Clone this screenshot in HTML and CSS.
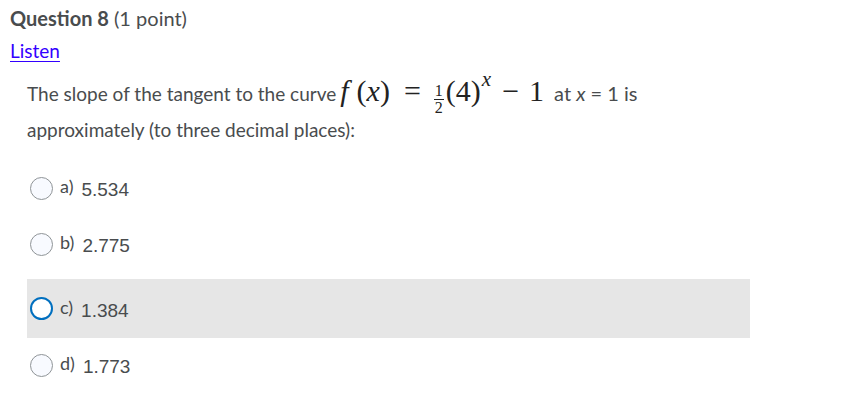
FILE: index.html
```html
<!DOCTYPE html>
<html>
<head>
<meta charset="utf-8">
<link rel="stylesheet" href="styles.css">
</head>
<body>
<div class="page">
  <h2 class="qtitle"><strong>Question 8</strong> <span class="pts">(1 point)</span></h2>
  <a class="listen" href="#">Listen</a>
  <div class="qtext">
    <p class="line1">The slope of the tangent to the curve<span class="math"><span class="mi f">f</span><span class="mo lp">(</span><span class="mi">x</span><span class="mo">)</span><span class="eq">=</span><span class="frac"><span class="num">1</span><span class="den">2</span></span><span class="mo">(4)</span><sup class="mi sup">x</sup><span class="minus">−</span><span class="one">1</span></span><span class="small">at <i class="ix">x</i> = 1 is</span></p>
    <p class="line2">approximately (to three decimal places):</p>
  </div>
  <div class="options">
    <div class="opt opt-a"><span class="radio"></span><span class="lbl">a)</span><span class="val">5.534</span></div>
    <div class="opt opt-b"><span class="radio"></span><span class="lbl">b)</span><span class="val">2.775</span></div>
    <div class="opt opt-c selected"><span class="radio"></span><span class="lbl">c)</span><span class="val">1.384</span></div>
    <div class="opt opt-d"><span class="radio"></span><span class="lbl">d)</span><span class="val">1.773</span></div>
  </div>
</div>
</body>
</html>
```

FILE: styles.css
```css
html, body {
  margin: 0;
  padding: 0;
  background: #ffffff;
}
body {
  font-family: Lato, "Open Sans", sans-serif;
  color: #494c4e;
}
.page {
  padding: 5px 0 0 10px;
}
.qtitle {
  margin: 0;
  font-size: 20px;
  line-height: 26px;
  font-weight: 400;
  color: #494c4e;
}
.qtitle strong {
  font-weight: 700;
}
.listen {
  display: inline-block;
  margin-top: 9px;
  font-size: 19px;
  line-height: 22px;
  color: #3300ff;
  text-decoration: underline;
  text-underline-offset: 3px;
}
.qtext {
  margin: 16px 0 0 17px;
  font-size: 19px;
  line-height: 30px;
}
.qtext p {
  margin: 0;
}
.math {
  font-family: "Liberation Serif", "DejaVu Serif", serif;
  font-size: 30px;
  line-height: 0;
  color: #222222;
}
.mi {
  font-style: italic;
}
.mo, .one {
  font-style: normal;
}
.f {
  margin-left: 4px;
}
.lp {
  margin-left: 8px;
}
.eq {
  margin: 0 13px 0 14px;
}
.frac {
  display: inline-flex;
  flex-direction: column;
  align-items: center;
  vertical-align: 5px;
  font-size: 16px;
  line-height: 14px;
  margin-right: 2px;
}
.frac .num {
  border-bottom: 1px solid #222;
  padding: 0 1px 1px;
}
.frac .den {
  padding: 1px 1px 0;
}
.sup {
  font-size: 21px;
  vertical-align: 15px;
  line-height: 0;
  margin-left: 1px;
}
.minus {
  margin: 0 10px 0 11px;
}
.one {
  margin-right: 10px;
}
.small {
  font-family: Lato, sans-serif;
  font-size: 20px;
  color: #494c4e;
}
.ix {
  font-style: italic;
}
.options {
  margin-top: 15px;
  width: 723px;
  margin-left: 17px;
}
.opt {
  display: flex;
  align-items: center;
  height: 56px;
  padding-left: 3px;
}
.opt.selected {
  height: 59px;
  margin-top: 7px;
  background: #e6e6e6;
}
.opt-d {
  height: 54px;
}
.radio {
  box-sizing: border-box;
  width: 23px;
  height: 23px;
  border-radius: 50%;
  border: 1px solid #8f9497;
  background: #f8faff;
  flex: none;
}
.selected .radio {
  border: 2px solid #006fbf;
  background: #ffffff;
}
.lbl {
  margin-left: 7px;
  font-size: 18px;
  position: relative;
  top: -2px;
}
.val {
  margin-left: 8px;
  font-family: "Liberation Sans", Arial, sans-serif;
  font-size: 19px;
  position: relative;
  top: 2px;
}
```
